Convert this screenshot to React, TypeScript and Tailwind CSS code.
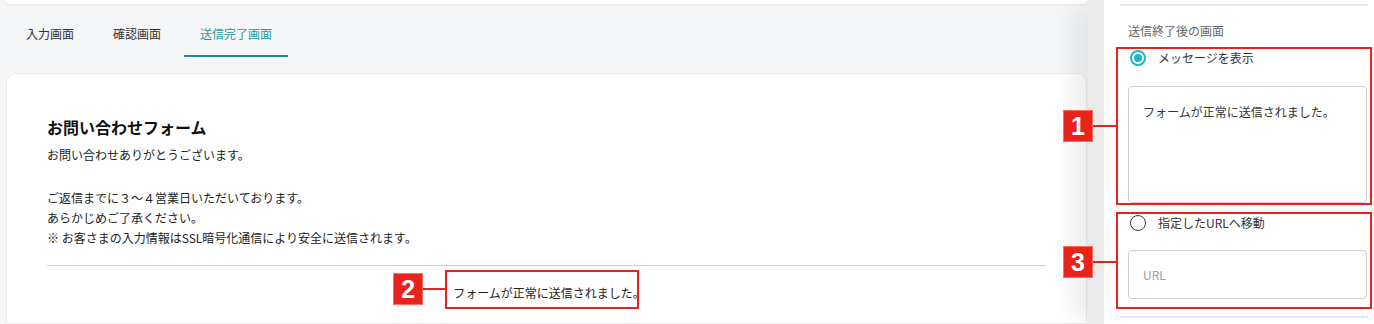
import type { ReactNode } from 'react';

const tabs = ['入力画面', '確認画面', '送信完了画面'];

function Callout({ num, top, line }: { num: string; top: number; line: number }) {
	return (
		<div className="absolute right-full flex items-center" style={{ top }}>
			<span className="flex h-[32px] w-[30px] items-center justify-center border border-[#ff6b5e] bg-[#e8231b] font-['Liberation_Sans',Arial,sans-serif] text-[25px] font-bold leading-none text-white">
				{num}
			</span>
			<span className="h-[2px] bg-[#e8231b]" style={{ width: line }} />
		</div>
	);
}

function Radio({ checked, children }: { checked?: boolean; children: ReactNode }) {
	return (
		<label className="flex h-[18px] items-center gap-[12px] pl-[10px] text-[12px] text-[#333]">
			{checked ? (
				<span className="flex size-[16px] items-center justify-center rounded-full border-2 border-[#1bb8c3]">
					<span className="size-[8px] rounded-full bg-[#1bb8c3]" />
				</span>
			) : (
				<span className="size-[16px] rounded-full border-[1.5px] border-[#3a3a3a]" />
			)}
			{children}
		</label>
	);
}

export default function App() {
	return (
		<div className="flex h-[324px] w-[1374px] overflow-hidden bg-[#f5f6f8] font-['Noto_Sans_CJK_JP','Noto_Sans',sans-serif]">
			<main className="flex w-[1088px] shrink-0 flex-col pl-[6px] pr-[1px]">
				<div className="h-[4px] shrink-0 rounded-b-[10px] bg-white shadow-[0_1px_3px_rgba(0,0,0,0.08)]" />

				<nav className="mt-[9px] flex gap-[7px] pl-[4px]">
					{tabs.map((tab, i) => (
						<button
							key={tab}
							className={
								i === 2
									? 'border-b-2 border-[#1e8c93] px-[16px] pt-[12px] pb-[12px] text-[12px] leading-[18px] text-[#1f9aa0]'
									: 'border-b-2 border-transparent px-[16px] pt-[12px] pb-[12px] text-[12px] leading-[18px] text-[#333]'
							}
						>
							{tab}
						</button>
					))}
				</nav>

				<section className="mt-[16px] flex-1 rounded-t-[10px] border border-[#ebebeb] bg-white px-[40px] pt-[41px]">
					<h2 className="text-[16px] font-bold leading-[24px] text-[#111]">お問い合わせフォーム</h2>
					<div className="mt-[6px] text-[12px] leading-[20px] text-[#222]">
						<p>お問い合わせありがとうございます。</p>
						<p className="mt-[23px]">
							ご返信までに３～４営業日いただいております。
							<br />
							あらかじめご了承ください。
							<br />※ お客さまの入力情報はSSL暗号化通信により安全に送信されます。
						</p>
					</div>
					<hr className="mt-[17px] border-[#d0d0d0]" />
					<div className="mt-[17px] flex justify-center pl-[5px]">
						<span className="relative text-[12px] leading-[20px] whitespace-nowrap text-[#222]">
							フォームが正常に送信されました。
							<span className="absolute -top-[13px] -left-[8px] h-[39px] w-[194px] border-2 border-[#e8231b]">
								<Callout num="2" top={1} line={24} />
							</span>
						</span>
					</div>
				</section>
			</main>

			<aside className="relative flex-1 border-l-[16px] border-[#ebebeb] bg-white pr-[6px] pl-[16px] shadow-[-22px_0_22px_-6px_rgba(0,0,0,0.07)]">
				<div className="mt-[4px] h-[2px] bg-[#e8e8e8]" />
				<p className="mt-[16px] pl-[8px] text-[12px] leading-[18px] text-[#666]">送信終了後の画面</p>

				<div className="relative -mx-[4px] mt-[7px] border-2 border-[#e8231b] pl-[2px] pr-[2px]">
					<Callout num="1" top={61} line={25} />
					<Radio checked>メッセージを表示</Radio>
					<div className="mt-[19px] mr-[1px] ml-[8px] h-[117px] rounded-[4px] border border-[#cfcfcf] px-[14px] pt-[16px] text-[12px] leading-[18px] text-[#333]">
						フォームが正常に送信されました。
					</div>
				</div>

				<div className="relative -mx-[4px] mt-[7px] border-2 border-[#e8231b] pr-[2px] pb-[8px] pl-[2px]">
					<Callout num="3" top={32} line={25} />
					<Radio>指定したURLへ移動</Radio>
					<div className="mt-[18px] mr-[1px] ml-[8px] flex h-[49px] items-center rounded-[4px] border border-[#cfcfcf] px-[14px] text-[12px] text-[#a0a0a0]">
						URL
					</div>
				</div>

				<div className="mt-[7px] h-[2px] bg-[#e8e8e8]" />
			</aside>
		</div>
	);
}
